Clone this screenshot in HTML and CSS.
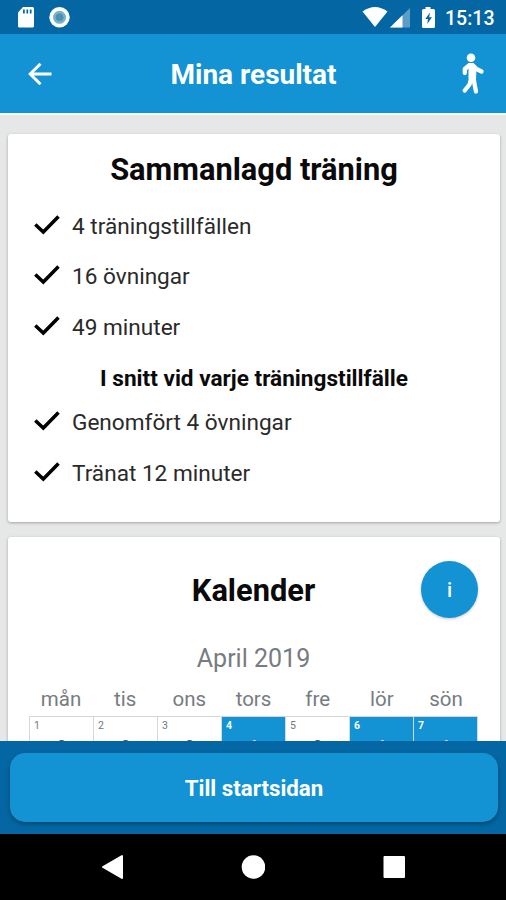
FILE: index.html
```html
<!DOCTYPE html>
<html lang="sv">
<head>
<meta charset="utf-8">
<meta name="viewport" content="width=device-width, initial-scale=1">
<title>Mina resultat</title>
<link rel="stylesheet" href="styles.css">
</head>
<body>
<div class="phone">
  <div class="status">
    <svg class="status-left" width="56" height="34" viewBox="0 0 56 34">
      <path d="M6 7h9.500q1.500 0 1.500 1.500v17.500q0 1.500-1.500 1.500h-13q-1.500 0-1.500-1.500V12.500z" fill="#fff"/>
      <path d="M6.900 9.500v4M10.300 9.500v4M13.700 9.500v4" stroke="#0467a3" stroke-width="1.700"/>
      <circle cx="42.500" cy="17.300" r="10.200" fill="#fff"/>
      <circle cx="42.500" cy="17.300" r="6.500" fill="#76b2cb"/>
      <circle cx="42.500" cy="17.300" r="3.800" fill="#4c91b0"/>
    </svg>
    <svg class="status-right" width="76" height="34" viewBox="0 0 76 34">
      <path d="M.5 11.500Q13 2.500 25.500 11.500L13 27z" fill="#fff"/>
      <path d="M48 8v19.500H28z" fill="#5c9dc5"/>
      <path d="M40.500 15.300v12.200H28z" fill="#fff"/>
      <path d="M63.500 7h5v2h3q1.500 0 1.500 1.500V26.500q0 1.500-1.500 1.500h-10q-1.500 0-1.500-1.500V10.500q0-1.500 1.500-1.500h2z" fill="#fff"/>
      <path d="M68 12.500l-4.700 6.500h2.700l-.8 5 4.800-6.700h-2.800z" fill="#0467a3"/>
    </svg>
    <span class="clock">15:13</span>
  </div>
  <header class="appbar">
    <svg class="back" width="24" height="24" viewBox="0 0 24 24"><path d="M23.500 12H2.500M12.500 1.700L2.200 12l10.300 10.300" fill="none" stroke="#fff" stroke-width="3"/></svg>
    <h1>Mina resultat</h1>
    <svg class="walker" width="24" height="42" viewBox="0 0 24 42">
      <circle cx="10" cy="4.700" r="4.300" fill="#fff"/>
      <path d="M7.500 10.500h5L15 16l-.5 10h-6.500v-9z" fill="#fff" stroke="#fff" stroke-linejoin="round"/>
      <path d="M8 12.500L3.800 16v4M12 12.500l3.500 3.500 5 2.500M10.500 24l-2 7.500-4.800 6M12.500 24l1 7 1.500 7.500" fill="none" stroke="#fff" stroke-width="4.300" stroke-linecap="round" stroke-linejoin="round"/>
    </svg>
  </header>
  <main class="content">
    <section class="card summary">
      <h2>Sammanlagd träning</h2>
      <ul class="facts">
        <li><svg class="tick" viewBox="0 0 26 20"><path d="M1.300 9.500L9.300 17 24.500 1.500"/></svg><span>4 träningstillfällen</span></li>
        <li><svg class="tick" viewBox="0 0 26 20"><path d="M1.300 9.500L9.300 17 24.500 1.500"/></svg><span>16 övningar</span></li>
        <li><svg class="tick" viewBox="0 0 26 20"><path d="M1.300 9.500L9.300 17 24.500 1.500"/></svg><span>49 minuter</span></li>
      </ul>
      <h3>I snitt vid varje träningstillfälle</h3>
      <ul class="facts">
        <li><svg class="tick" viewBox="0 0 26 20"><path d="M1.300 9.500L9.300 17 24.500 1.500"/></svg><span>Genomfört 4 övningar</span></li>
        <li><svg class="tick" viewBox="0 0 26 20"><path d="M1.300 9.500L9.300 17 24.500 1.500"/></svg><span>Tränat 12 minuter</span></li>
      </ul>
    </section>
    <section class="card calendar">
      <div class="calendar-head">
        <h2>Kalender</h2>
        <button class="info">i</button>
      </div>
      <p class="month">April 2019</p>
      <div class="weekdays"><span>mån</span><span>tis</span><span>ons</span><span>tors</span><span>fre</span><span>lör</span><span>sön</span></div>
      <div class="days">
        <div class="day"><small>1</small><b>0</b></div>
        <div class="day"><small>2</small><b>0</b></div>
        <div class="day"><small>3</small><b>0</b></div>
        <div class="day trained"><small>4</small><b>1</b></div>
        <div class="day"><small>5</small><b>0</b></div>
        <div class="day trained"><small>6</small><b>1</b></div>
        <div class="day trained"><small>7</small><b>1</b></div>
      </div>
    </section>
  </main>
  <footer class="actions"><button class="start">Till startsidan</button></footer>
  <nav class="navbar">
    <svg width="24" height="26" viewBox="0 0 24 26"><path d="M22 2v22L3 13z" fill="#fff" stroke="#fff" stroke-width="2" stroke-linejoin="round"/></svg>
    <svg width="24" height="26" viewBox="0 0 24 26"><circle cx="12.500" cy="13" r="11.800" fill="#fff"/></svg>
    <svg width="24" height="26" viewBox="0 0 24 26"><rect x="1.500" y="2" width="21.500" height="22" rx="1" fill="#fff"/></svg>
  </nav>
</div>
</body>
</html>
```
FILE: styles.css
```css
* { box-sizing: border-box; }
body { margin: 0; font-family: Roboto, "Liberation Sans", sans-serif; }
h1, h2, h3, p, ul { margin: 0; padding: 0; }
button { border: 0; padding: 0; font: inherit; color: #fff; background: #1392d4; }

.phone { width: 506px; height: 900px; display: flex; flex-direction: column; overflow: hidden; background: #e6e7e7; }

.status { height: 34px; flex: none; display: flex; align-items: center; padding: 0 9px 0 17px; background: #0467a3; }
.status-right { margin-left: auto; }
.clock { width: 52px; margin-left: 7px; padding-top: 3px; color: #fff; font-size: 19.500px; font-weight: 500; line-height: 34px; white-space: nowrap; }

.appbar { height: 79px; flex: none; display: grid; grid-template-columns: 60px 1fr 60px; align-items: center; background: #1392d4; color: #fff; }
.back { margin-left: 28px; }
.appbar h1 { padding: 2px 0 0 1px; text-align: center; font-size: 28px; font-weight: 700; line-height: 40px; }
.walker { margin-left: 15px; }

.content { flex: 1; min-height: 0; overflow: hidden; padding: 19px 6px 0 8px; border-top: 2px solid #f7fafb; display: flex; flex-direction: column; gap: 15px; }
.card { flex: none; background: #fff; border-radius: 3px; box-shadow: 0 1px 3px rgba(0, 0, 0, .3); }
.card h2 { text-align: center; font-size: 30.800px; font-weight: 700; line-height: 42px; color: #0a0a0a; }

.summary { height: 388px; padding-top: 15px; }
.facts { list-style: none; }
.facts li { height: 50.500px; display: flex; align-items: center; padding-left: 26px; gap: 12px; font-size: 22.600px; color: #2a2a2a; }
.summary h2 + .facts { padding-top: 10px; }
.tick { width: 26px; height: 20px; margin-top: -3px; }
.tick path { fill: none; stroke: #000; stroke-width: 3.500; }
.summary h3 { text-align: center; font-size: 22.600px; font-weight: 700; line-height: 26px; margin: 13px 0 6px; color: #0a0a0a; }

.calendar { height: 420px; padding: 24px 22px 0 21px; }
.calendar-head { display: grid; grid-template-columns: 57px 1fr 57px; align-items: center; }
.calendar-head h2 { grid-column: 2; padding-top: 2px; }
.info { width: 57px; height: 57px; border-radius: 50%; font-size: 20px; font-weight: 500; box-shadow: 0 1px 3px rgba(0, 0, 0, .22); }
.month { margin-top: 26px; text-align: center; font-size: 25px; line-height: 30px; color: #777c80; }
.weekdays, .days { display: grid; grid-template-columns: repeat(7, 1fr); }
.weekdays { margin-top: 11px; height: 31px; text-align: center; font-size: 20.500px; line-height: 28px; color: #777c80; }
.days { border-left: 1px solid #d5d8d9; }
.day { height: 64px; padding: 3px 4px; border: 1px solid #d5d8d9; border-left: 0; color: #555; }
.day small { display: block; font-size: 10.500px; line-height: 12px; color: #777; }
.day b { display: block; margin-top: 4px; text-align: center; font-size: 18px; font-weight: 500; line-height: 22px; }
.day.trained { background: #1392d4; color: #fff; }
.day.trained small { font-weight: 700; color: #fff; }

.actions { height: 93px; flex: none; padding: 12px 8px 12px 10px; background: #0467a3; }
.start { display: block; width: 100%; height: 69px; border-radius: 15px; font-size: 22.300px; font-weight: 700; box-shadow: 0 2px 4px rgba(0, 0, 0, .35); }
.navbar { height: 66px; flex: none; display: flex; justify-content: center; align-items: center; gap: 117px; background: #000; }
```
